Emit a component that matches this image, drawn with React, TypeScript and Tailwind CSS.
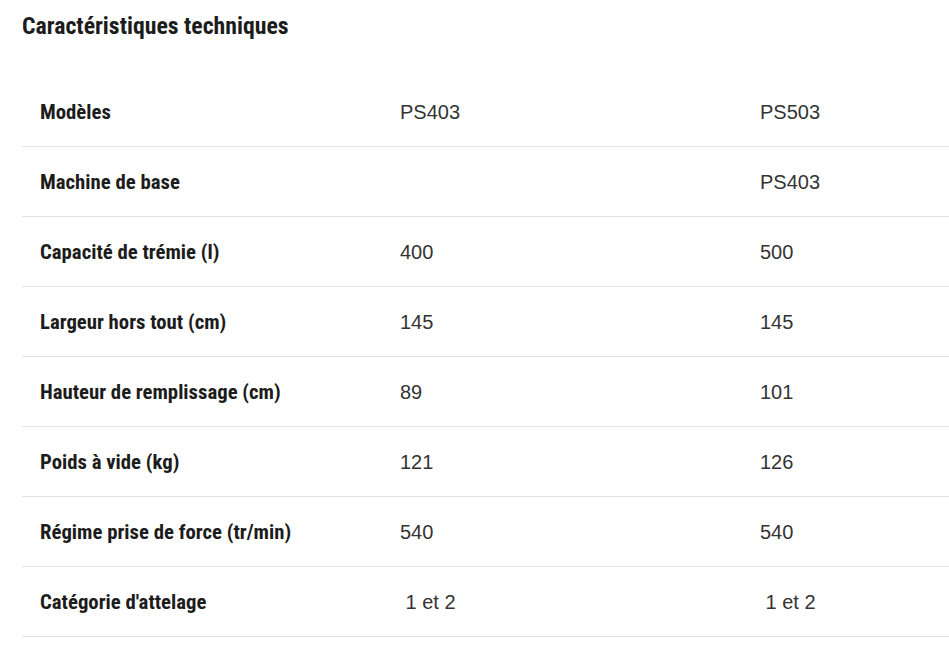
const ROWS: [string, string, string][] = [
  ["Modèles", "PS403", "PS503"],
  ["Machine de base", "", "PS403"],
  ["Capacité de trémie (l)", "400", "500"],
  ["Largeur hors tout (cm)", "145", "145"],
  ["Hauteur de remplissage (cm)", "89", "101"],
  ["Poids à vide (kg)", "121", "126"],
  ["Régime prise de force (tr/min)", "540", "540"],
  ["Catégorie d'attelage", " 1 et 2", " 1 et 2"],
];

const condensed = "font-['Roboto_Condensed','Liberation_Sans_Narrow',sans-serif]";
const regular = "font-['Liberation_Sans',Arial,sans-serif]";

export default function App() {
  return (
    <div className="h-[651px] w-[949px] overflow-hidden bg-white">
      <div className="pl-[22px] pt-[11px]">
        <h2 className={`${condensed} text-[23.75px] font-bold leading-[30px] text-[#1c1c1c]`}>
          Caractéristiques techniques
        </h2>
        <table className="mt-[35px] w-[1080px] table-fixed border-collapse">
          <tbody>
            {ROWS.map(([label, a, b]) => (
              <tr key={label} className="h-[70px] border-b border-[#e2e2e2]">
                <td className={`${condensed} w-[360px] px-[18px] pt-[2px] text-[20.75px] leading-[28px] font-bold text-[#1c1c1c]`}>
                  {label}
                </td>
                <td className={`${regular} w-[360px] whitespace-pre px-[18px] pt-[2px] text-[20px] leading-[28px] text-[#333]`}>
                  {a}
                </td>
                <td className={`${regular} w-[360px] whitespace-pre px-[18px] pt-[2px] text-[20px] leading-[28px] text-[#333]`}>
                  {b}
                </td>
              </tr>
            ))}
          </tbody>
        </table>
      </div>
    </div>
  );
}
